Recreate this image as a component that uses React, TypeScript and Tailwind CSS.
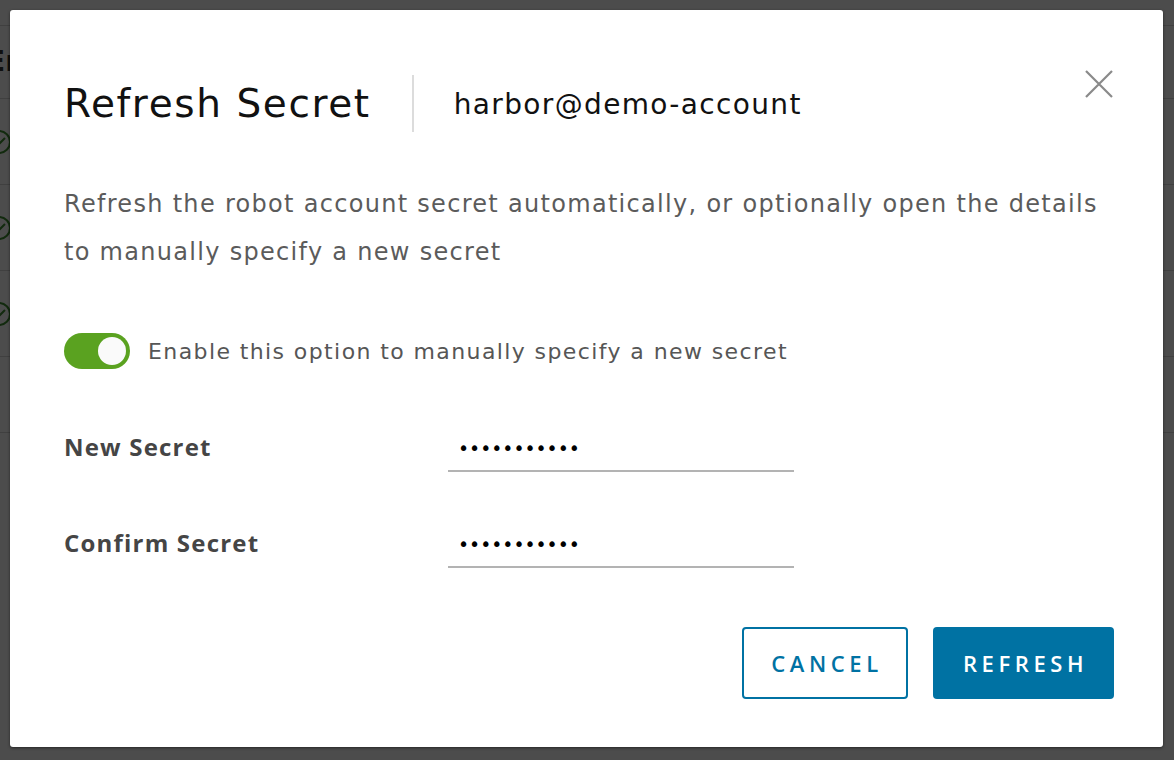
import { useState } from "react";

const rows = [0, 1, 2];

function CheckCircle() {
  return (
    <svg width="26" height="26" viewBox="0 0 26 26" fill="none">
      <circle cx="13" cy="13" r="11" stroke="#3c8d2f" strokeWidth="2" />
      <path d="M7 13l4 4 8-8" stroke="#3c8d2f" strokeWidth="2" />
    </svg>
  );
}

const App = () => {
  const [manual, setManual] = useState(true);

  return (
    <div className="relative h-[760px] w-[1174px] overflow-hidden bg-white font-['DejaVu_Sans',sans-serif]">
      {/* page behind the dialog */}
      <div className="pt-[25px]">
        <div className="flex h-[74px] items-center border-y border-[#d7d7d7]">
          <span className="-ml-[14px] text-[28px] font-semibold text-[#333]">Er</span>
        </div>
        {rows.map((r) => (
          <div key={r} className="-ml-[14px] flex h-[86px] items-center border-b border-[#d7d7d7]">
            <CheckCircle />
          </div>
        ))}
        <div className="h-[76px] border-b border-[#d7d7d7]" />
      </div>

      {/* backdrop */}
      <div className="absolute inset-0 bg-[rgba(0,0,0,0.7)] p-[10px]">
        <div className="relative h-[737px] w-[1153px] rounded-[3px] bg-white pb-[49px] pl-[54px] pr-[49px] pt-[60px] shadow-[0_1px_3px_rgba(0,0,0,0.5)]">
          {/* header */}
          <div className="flex items-start justify-between">
            <div className="flex h-[66px] items-center">
              <h3 className="text-[39px] font-normal leading-none tracking-[1.6px] text-[#111]">Refresh Secret</h3>
              <div className="ml-[41px] h-[57px] w-[2px] bg-[#dcdcdc]" />
              <span className="ml-[40px] mt-[4px] text-[28px] leading-none tracking-[1.35px] text-[#111]">
                harbor@demo-account
              </span>
            </div>
            <button className="mr-[1px] text-[#8a8a8a]">
              <svg width="28" height="28" viewBox="0 0 28 28" fill="none">
                <path d="M1 1l26 26M27 1L1 27" stroke="currentColor" strokeWidth="2.2" />
              </svg>
            </button>
          </div>

          {/* description */}
          <p className="mt-[44px] text-[24px] leading-[48px] tracking-[1.3px] text-[#5b5b5b]">
            Refresh the robot account secret automatically, or optionally open the details
            <br />
            to manually specify a new secret
          </p>

          {/* toggle */}
          <div className="mt-[57px] flex items-center">
            <button
              onClick={() => setManual(!manual)}
              className={`flex h-[36px] w-[66px] items-center rounded-full px-[4px] ${
                manual ? "justify-end bg-[#5aa220]" : "justify-start bg-[#8c8c8c]"
              }`}
            >
              <span className="h-[28px] w-[28px] rounded-full bg-[#fafafa]" />
            </button>
            <span className="ml-[18px] text-[22px] tracking-[1.4px] text-[#565656]">
              Enable this option to manually specify a new secret
            </span>
          </div>

          {/* form */}
          <div className="mt-[57px] flex items-center">
            <label className="w-[384px] pb-[4px] font-['Open_Sans',sans-serif] text-[24px] font-bold tracking-[1.2px] text-[#454545]">
              New Secret
            </label>
            <input
              type="password"
              readOnly
              value="Harbor12345"
              className="h-[46px] w-[346px] border-b-2 border-[#b3b3b3] px-[10px] text-[18.8px] text-black outline-none"
            />
          </div>
          <div className="mt-[50px] flex items-center">
            <label className="w-[384px] pb-[4px] font-['Open_Sans',sans-serif] text-[24px] font-bold tracking-[1.2px] text-[#454545]">
              Confirm Secret
            </label>
            <input
              type="password"
              readOnly
              value="Harbor12345"
              className="h-[46px] w-[346px] border-b-2 border-[#b3b3b3] px-[10px] text-[18.8px] text-black outline-none"
            />
          </div>

          {/* footer */}
          <div className="mt-[59px] flex justify-end gap-[25px] font-['Open_Sans',sans-serif]">
            <button className="h-[72px] w-[166px] rounded-[4px] border-2 border-[#0072a3] pl-[4px] text-[22px] font-semibold tracking-[4.6px] text-[#0072a3]">
              CANCEL
            </button>
            <button className="h-[72px] w-[181px] rounded-[4px] bg-[#0072a3] pl-[4px] text-[22px] font-semibold tracking-[4.6px] text-white">
              REFRESH
            </button>
          </div>
        </div>
      </div>
    </div>
  );
};

export default App;
